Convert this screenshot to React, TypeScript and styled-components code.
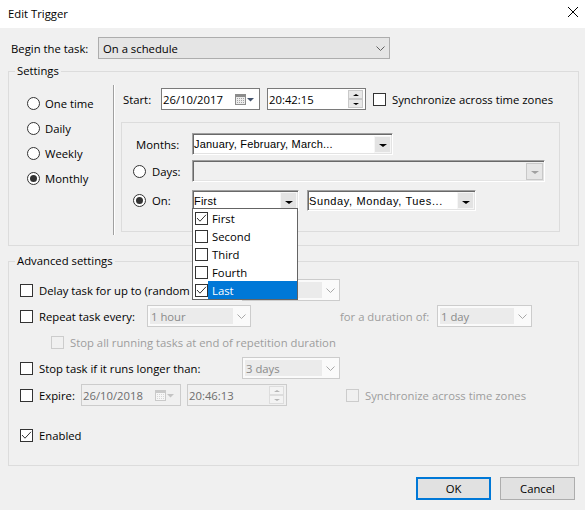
import React from "react";
import styled, { createGlobalStyle, css } from "styled-components";

const UI = `"Open Sans", "Noto Sans", "Liberation Sans", sans-serif`;
const CLASSIC = `"Liberation Sans", Arial, sans-serif`;
const UI_SIZE = "11.3px";

const GlobalStyle = createGlobalStyle`
  *, *::before, *::after { box-sizing: border-box; }
  html, body { margin: 0; padding: 0; background: #f0f0f0; }
  body { font-family: ${UI}; font-size: ${UI_SIZE}; color: #000; }
`;

const Window = styled.div`
  width: 585px;
  height: 510px;
  background: #f0f0f0;
  display: flex;
  flex-direction: column;
  overflow: hidden;
`;

const TitleBar = styled.div`
  height: 28px;
  flex-shrink: 0;
  background: #fff;
  display: flex;
  align-items: center;
  justify-content: space-between;
  padding: 0 7px 0 8px;
`;

const Title = styled.span`
  font-size: ${UI_SIZE};
  line-height: 16px;
`;

const CloseButton = styled.div`
  width: 10px;
  height: 10px;
  display: flex;
  margin-top: -4px;
`;

const Body = styled.div`
  display: flex;
  flex-direction: column;
  padding-left: 8px;
`;

const BeginRow = styled.div`
  margin-top: 9px;
  height: 22px;
  display: flex;
  align-items: center;
  padding-left: 3px;
`;

const FieldLabel = styled.span<{ $w: number }>`
  width: ${(p) => p.$w}px;
  flex-shrink: 0;
  white-space: nowrap;
`;

const ModernCombo = styled.div<{ $w: number; $disabled?: boolean }>`
  width: ${(p) => p.$w}px;
  height: 22px;
  flex-shrink: 0;
  display: flex;
  align-items: center;
  border: 1px solid ${(p) => (p.$disabled ? "#cccccc" : "#adadad")};
  background: ${(p) => (p.$disabled ? "#fafafa" : "#e5e5e5")};
  padding: ${(p) => (p.$disabled ? "2px" : "0 0 0 4px")};
`;

const ComboValue = styled.div<{ $disabled?: boolean }>`
  flex: 1;
  height: 100%;
  display: flex;
  align-items: center;
  white-space: nowrap;
  overflow: hidden;
  ${(p) =>
    p.$disabled &&
    css`
      background: #ebebeb;
      color: #8a8a8a;
      padding-left: 1px;
      margin-right: 1px;
    `}
`;

const ChevronBox = styled.div<{ $w: number }>`
  width: ${(p) => p.$w}px;
  height: 100%;
  display: flex;
  align-items: center;
  justify-content: center;
  flex-shrink: 0;
`;

const Chevron = ({ color }: { color: string }) => (
  <svg width="9" height="5" viewBox="0 0 9 5">
    <path d="M0.5 0.5 L4.5 4.5 L8.5 0.5" fill="none" stroke={color} strokeWidth="1" />
  </svg>
);

const Group = styled.fieldset<{ $mt: number; $h: number }>`
  margin: ${(p) => p.$mt}px 0 0 0;
  padding: 0;
  min-width: 0;
  width: 571px;
  height: ${(p) => p.$h}px;
  border: 1px solid #dcdcdc;
`;

const Legend = styled.legend`
  margin-left: 6px;
  padding: 0 2px;
  line-height: 16px;
  font-size: ${UI_SIZE};
`;

const SettingsBody = styled.div`
  height: 166px;
  display: flex;
`;

const LeftCol = styled.div`
  width: 104px;
  flex-shrink: 0;
  padding: 12px 0 0 18px;
  display: flex;
  flex-direction: column;
`;

const RadioRow = styled.div`
  height: 25px;
  display: flex;
  align-items: center;
  gap: 5px;
`;

const RadioCircle = styled.span<{ $checked?: boolean }>`
  width: 13px;
  height: 13px;
  flex-shrink: 0;
  border-radius: 50%;
  border: 1px solid #333;
  background: #fff;
  display: flex;
  align-items: center;
  justify-content: center;
  &::after {
    content: "";
    width: 7px;
    height: 7px;
    border-radius: 50%;
    background: ${(p) => (p.$checked ? "#333" : "transparent")};
  }
`;

const Separator = styled.div`
  width: 2px;
  height: 150px;
  margin-top: 6px;
  flex-shrink: 0;
  border-left: 1px solid #a0a0a0;
  border-right: 1px solid #ffffff;
`;

const RightCol = styled.div`
  display: flex;
  flex-direction: column;
  padding-left: 6px;
`;

const StartRow = styled.div`
  margin-top: 9px;
  height: 22px;
  display: flex;
  align-items: center;
  padding-left: 2px;
`;

const InputBox = styled.div<{ $w: number; $ml?: number; $disabled?: boolean }>`
  width: ${(p) => p.$w}px;
  height: 22px;
  margin-left: ${(p) => p.$ml ?? 0}px;
  flex-shrink: 0;
  display: flex;
  align-items: center;
  padding: 0 ${(p) => (p.$disabled ? 6 : 5)}px 0 1px;
  border: 1px solid ${(p) => (p.$disabled ? "#cccccc" : "#7a7a7a")};
  background: ${(p) => (p.$disabled ? "#f0f0f0" : "#ffffff")};
  color: ${(p) => (p.$disabled ? "#6d6d6d" : "#000")};
`;

const SpinInputBox = styled(InputBox)`
  padding-right: 2px;
`;

const InputValue = styled.span`
  flex: 1;
  white-space: nowrap;
`;

const CalendarGlyph = ({ disabled }: { disabled?: boolean }) => {
  const frame = disabled ? "#c9c9c9" : "#8c8c8c";
  const fill = disabled ? "#f6f6f6" : "#ececec";
  const dot = disabled ? "#d6d6d6" : "#a4a4a4";
  const tri = disabled ? "#c4c4c4" : "#44546e";
  const dots: JSX.Element[] = [];
  for (let r = 0; r < 3; r++)
    for (let c = 0; c < 4; c++)
      dots.push(<rect key={`${r}-${c}`} x={2 + c * 2} y={4 + r * 2} width="1" height="1" fill={dot} />);
  return (
    <svg width="19" height="11" viewBox="0 0 19 11" shapeRendering="crispEdges">
      <rect x="0.5" y="0.5" width="10" height="10" fill={fill} stroke={frame} />
      <rect x="1" y="1" width="9" height="2" fill={frame} />
      {dots}
      <path d="M12 4 H19 L15.5 7.5 Z" fill={tri} shapeRendering="auto" />
    </svg>
  );
};

const SpinBox = styled.div`
  display: flex;
  flex-direction: column;
  flex-shrink: 0;
`;

const SpinHalf = styled.div<{ $disabled?: boolean }>`
  width: 15px;
  height: 9px;
  display: flex;
  align-items: center;
  justify-content: center;
  background: ${(p) => (p.$disabled ? "#f3f3f3" : "#e8e8e8")};
  border: 1px solid ${(p) => (p.$disabled ? "#dddddd" : "#c9c9c9")};
`;

const Arrow = styled.span<{ $up?: boolean; $color: string; $size: number }>`
  width: 0;
  height: 0;
  border-left: ${(p) => p.$size}px solid transparent;
  border-right: ${(p) => p.$size}px solid transparent;
  ${(p) =>
    p.$up
      ? css`
          border-bottom: ${p.$size - 1}px solid ${p.$color};
        `
      : css`
          border-top: ${p.$size - 1}px solid ${p.$color};
        `}
`;

const Spin = ({ disabled }: { disabled?: boolean }) => {
  const c = disabled ? "#b4b4b4" : "#000";
  return (
    <SpinBox>
      <SpinHalf $disabled={disabled}>
        <Arrow $up $color={c} $size={3} />
      </SpinHalf>
      <SpinHalf $disabled={disabled}>
        <Arrow $color={c} $size={3} />
      </SpinHalf>
    </SpinBox>
  );
};

const CheckLabel = styled.div<{ $ml?: number; $disabled?: boolean }>`
  display: flex;
  align-items: center;
  gap: 6px;
  margin-left: ${(p) => p.$ml ?? 0}px;
  white-space: nowrap;
  color: ${(p) => (p.$disabled ? "#9d9d9d" : "#000")};
`;

const CheckBoxBox = styled.span<{ $disabled?: boolean }>`
  width: 13px;
  height: 13px;
  flex-shrink: 0;
  display: flex;
  align-items: center;
  justify-content: center;
  border: 1px solid ${(p) => (p.$disabled ? "#cccccc" : "#333333")};
  background: ${(p) => (p.$disabled ? "#f0f0f0" : "#ffffff")};
`;

const CheckBox = ({ checked, disabled }: { checked?: boolean; disabled?: boolean }) => (
  <CheckBoxBox $disabled={disabled}>
    {checked && (
      <svg width="11" height="11" viewBox="0 0 11 11">
        <path d="M1 5 L4 8.2 L10 1.8" fill="none" stroke="#333" strokeWidth="1" />
      </svg>
    )}
  </CheckBoxBox>
);

const Panel = styled.div`
  margin-top: 12px;
  width: 439px;
  height: 110px;
  border: 1px solid #dcdcdc;
  padding: 10px 0 0 11px;
  display: flex;
  flex-direction: column;
`;

const PanelRow = styled.div<{ $h: number; $mt?: number }>`
  height: ${(p) => p.$h}px;
  margin-top: ${(p) => p.$mt ?? 0}px;
  display: flex;
  align-items: center;
`;

const PanelLabel = styled.span`
  width: 59px;
  padding-left: 3px;
  flex-shrink: 0;
`;

const RadioLabel = styled.div`
  width: 59px;
  flex-shrink: 0;
  display: flex;
  align-items: center;
  gap: 6px;
`;

const ClassicCombo = styled.div<{ $w: number; $h: number; $ml?: number; $disabled?: boolean }>`
  width: ${(p) => p.$w}px;
  height: ${(p) => p.$h}px;
  margin-left: ${(p) => p.$ml ?? 0}px;
  flex-shrink: 0;
  display: flex;
  align-items: center;
  padding: 1px;
  background: ${(p) => (p.$disabled ? "#f0f0f0" : "#ffffff")};
  border: 1px solid;
  border-color: #a0a0a0 #ffffff #ffffff #a0a0a0;
  box-shadow: inset 1px 1px 0 #696969, inset -1px -1px 0 #e3e3e3;
  font-family: ${CLASSIC};
  font-size: 11px;
`;

const ClassicText = styled.span<{ $ls?: number }>`
  flex: 1;
  white-space: nowrap;
  overflow: hidden;
  letter-spacing: ${(p) => p.$ls ?? 0.2}px;
`;

const DropBtn = styled.div<{ $disabled?: boolean }>`
  width: 17px;
  height: 17px;
  flex-shrink: 0;
  display: flex;
  align-items: center;
  justify-content: center;
  padding-top: 3px;
  background: ${(p) => (p.$disabled ? "#e6e6e6" : "#e3e3e3")};
  border: 1px solid ${(p) => (p.$disabled ? "#c8c8c8" : "#f6f6f6")};
`;

const DropAnchor = styled.div`
  position: relative;
  display: flex;
`;

const DropList = styled.div`
  position: absolute;
  left: 0;
  top: 18px;
  width: 106px;
  z-index: 10;
  background: #fff;
  border: 1px solid #646464;
  display: flex;
  flex-direction: column;
  font-family: ${UI};
  font-size: ${UI_SIZE};
`;

const ListItem = styled.div`
  height: 18px;
  display: flex;
  align-items: center;
  padding-left: 2px;
`;

const ItemText = styled.span<{ $selected?: boolean }>`
  flex: 1;
  height: 100%;
  display: flex;
  align-items: center;
  padding-left: 4px;
  background: ${(p) => (p.$selected ? "#0078d7" : "transparent")};
  color: ${(p) => (p.$selected ? "#fff" : "#000")};
`;

const AdvBody = styled.div`
  display: flex;
  flex-direction: column;
  padding: 10px 0 0 11px;
`;

const AdvRow = styled.div<{ $mt?: number; $pl?: number }>`
  height: 22px;
  margin-top: ${(p) => p.$mt ?? 0}px;
  padding-left: ${(p) => p.$pl ?? 0}px;
  display: flex;
  align-items: center;
`;

const LabelCell = styled.div<{ $w: number }>`
  width: ${(p) => p.$w}px;
  flex-shrink: 0;
  display: flex;
  align-items: center;
  gap: 6px;
  white-space: nowrap;
`;

const GreyText = styled.span<{ $w?: number; $ml?: number }>`
  color: #9d9d9d;
  white-space: nowrap;
  margin-left: ${(p) => p.$ml ?? 0}px;
  ${(p) =>
    p.$w &&
    css`
      width: ${p.$w}px;
      flex-shrink: 0;
    `}
`;

const ButtonRow = styled.div`
  margin-top: 11px;
  display: flex;
  justify-content: flex-end;
  gap: 9px;
  padding-right: 10px;
`;

const Button = styled.div<{ $primary?: boolean }>`
  width: 75px;
  height: 23px;
  display: flex;
  align-items: center;
  justify-content: center;
  background: #e1e1e1;
  border: ${(p) => (p.$primary ? "2px solid #0078d7" : "1px solid #adadad")};
`;

const DisabledCombo = ({ w, value }: { w: number; value: string }) => (
  <ModernCombo $w={w} $disabled>
    <ComboValue $disabled>{value}</ComboValue>
    <ChevronBox $w={14}>
      <Chevron color="#a8a8a8" />
    </ChevronBox>
  </ModernCombo>
);

const ClassicDrop = ({ disabled }: { disabled?: boolean }) => (
  <DropBtn $disabled={disabled}>
    <Arrow $color={disabled ? "#a0a0a0" : "#000"} $size={4} />
  </DropBtn>
);

const recurrences = [
  { label: "One time", checked: false },
  { label: "Daily", checked: false },
  { label: "Weekly", checked: false },
  { label: "Monthly", checked: true },
];

const weekItems = [
  { label: "First", checked: true, selected: false },
  { label: "Second", checked: false, selected: false },
  { label: "Third", checked: false, selected: false },
  { label: "Fourth", checked: false, selected: false },
  { label: "Last", checked: true, selected: true },
];

export default function App() {
  return (
    <>
      <GlobalStyle />
      <Window>
        <TitleBar>
          <Title>Edit Trigger</Title>
          <CloseButton>
            <svg width="10" height="10" viewBox="0 0 10 10">
              <path d="M0 0 L10 10 M10 0 L0 10" stroke="#000" strokeWidth="1" />
            </svg>
          </CloseButton>
        </TitleBar>
        <Body>
          <BeginRow>
            <FieldLabel $w={87}>Begin the task:</FieldLabel>
            <ModernCombo $w={292}>
              <ComboValue>On a schedule</ComboValue>
              <ChevronBox $w={17}>
                <Chevron color="#606060" />
              </ChevronBox>
            </ModernCombo>
          </BeginRow>

          <Group $mt={4} $h={183}>
            <Legend>Settings</Legend>
            <SettingsBody>
              <LeftCol>
                {recurrences.map((r) => (
                  <RadioRow key={r.label}>
                    <RadioCircle $checked={r.checked} />
                    <span>{r.label}</span>
                  </RadioRow>
                ))}
              </LeftCol>
              <Separator />
              <RightCol>
                <StartRow>
                  <FieldLabel $w={38}>Start:</FieldLabel>
                  <InputBox $w={99}>
                    <InputValue>26/10/2017</InputValue>
                    <CalendarGlyph />
                  </InputBox>
                  <SpinInputBox $w={99} $ml={7}>
                    <InputValue>20:42:15</InputValue>
                    <Spin />
                  </SpinInputBox>
                  <CheckLabel $ml={7}>
                    <CheckBox />
                    <span>Synchronize across time zones</span>
                  </CheckLabel>
                </StartRow>
                <Panel>
                  <PanelRow $h={22}>
                    <PanelLabel>Months:</PanelLabel>
                    <ClassicCombo $w={201} $h={22}>
                      <ClassicText>January, February, March...</ClassicText>
                      <ClassicDrop />
                    </ClassicCombo>
                  </PanelRow>
                  <PanelRow $h={22} $mt={5}>
                    <RadioLabel>
                      <RadioCircle />
                      <span>Days:</span>
                    </RadioLabel>
                    <ClassicCombo $w={353} $h={22} $disabled>
                      <ClassicText />
                      <ClassicDrop disabled />
                    </ClassicCombo>
                  </PanelRow>
                  <PanelRow $h={21} $mt={8}>
                    <RadioLabel>
                      <RadioCircle $checked />
                      <span>On:</span>
                    </RadioLabel>
                    <DropAnchor>
                      <ClassicCombo $w={107} $h={21}>
                        <ClassicText>First</ClassicText>
                        <ClassicDrop />
                      </ClassicCombo>
                      <DropList>
                        {weekItems.map((it) => (
                          <ListItem key={it.label}>
                            <CheckBox checked={it.checked} />
                            <ItemText $selected={it.selected}>{it.label}</ItemText>
                          </ListItem>
                        ))}
                      </DropList>
                    </DropAnchor>
                    <ClassicCombo $w={169} $h={21} $ml={8}>
                      <ClassicText $ls={0.6}>Sunday, Monday, Tues...</ClassicText>
                      <ClassicDrop />
                    </ClassicCombo>
                  </PanelRow>
                </Panel>
              </RightCol>
            </SettingsBody>
          </Group>

          <Group $mt={7} $h={213}>
            <Legend>Advanced settings</Legend>
            <AdvBody>
              <AdvRow>
                <LabelCell $w={222}>
                  <CheckBox />
                  <span>Delay task for up to (random delay):</span>
                </LabelCell>
                <DisabledCombo w={98} value="1 hour" />
              </AdvRow>
              <AdvRow $mt={4}>
                <LabelCell $w={127}>
                  <CheckBox />
                  <span>Repeat task every:</span>
                </LabelCell>
                <DisabledCombo w={104} value="1 hour" />
                <GreyText $ml={89} $w={97}>
                  for a duration of:
                </GreyText>
                <DisabledCombo w={95} value="1 day" />
              </AdvRow>
              <AdvRow $mt={4} $pl={31}>
                <CheckLabel $disabled>
                  <CheckBox disabled />
                  <span>Stop all running tasks at end of repetition duration</span>
                </CheckLabel>
              </AdvRow>
              <AdvRow $mt={4}>
                <LabelCell $w={222}>
                  <CheckBox />
                  <span>Stop task if it runs longer than:</span>
                </LabelCell>
                <DisabledCombo w={98} value="3 days" />
              </AdvRow>
              <AdvRow $mt={5}>
                <LabelCell $w={61}>
                  <CheckBox />
                  <span>Expire:</span>
                </LabelCell>
                <InputBox $w={100} $disabled>
                  <InputValue>26/10/2018</InputValue>
                  <CalendarGlyph disabled />
                </InputBox>
                <SpinInputBox $w={100} $ml={6} $disabled>
                  <InputValue>20:46:13</InputValue>
                  <Spin disabled />
                </SpinInputBox>
                <CheckLabel $ml={59} $disabled>
                  <CheckBox disabled />
                  <span>Synchronize across time zones</span>
                </CheckLabel>
              </AdvRow>
              <AdvRow $mt={18}>
                <LabelCell $w={120}>
                  <CheckBox checked />
                  <span>Enabled</span>
                </LabelCell>
              </AdvRow>
            </AdvBody>
          </Group>

          <ButtonRow>
            <Button $primary>OK</Button>
            <Button>Cancel</Button>
          </ButtonRow>
        </Body>
      </Window>
    </>
  );
}
